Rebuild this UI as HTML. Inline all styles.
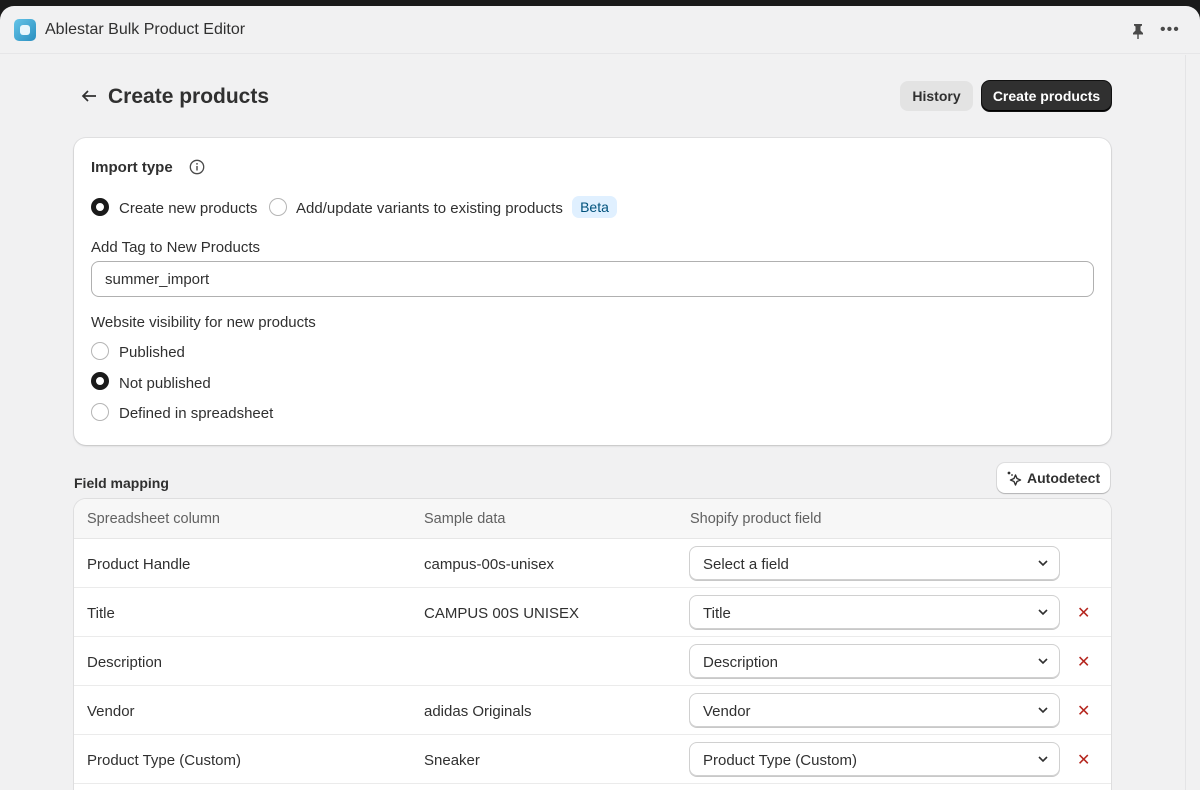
<!DOCTYPE html>
<html><head><style>
*{box-sizing:border-box;margin:0;padding:0}
html,body{width:1200px;height:790px;overflow:hidden}
body{background:#1a1a1a;font-family:"Liberation Sans",sans-serif;color:#303030;position:relative}
.win{position:absolute;left:0;top:6px;width:1200px;height:784px;background:#f1f1f2;border-radius:14px 14px 0 0}
.hdr{height:48px;display:flex;align-items:center;padding-left:14px;font-size:16px;color:#303030;border-bottom:1px solid #e6e6e8}
.logo{width:22px;height:22px;border-radius:5px;background:linear-gradient(135deg,#64c4e8,#2a8fc0);margin-right:9px;display:flex;align-items:center;justify-content:center}
.logo i{width:10px;height:10px;background:#e8f6fc;border-radius:3px;display:block}
.inner{position:absolute;left:0;top:49px;width:1186px;bottom:0;border-right:1px solid #e4e4e6}
.abs{position:absolute}
.card{position:absolute;left:74px;top:138px;width:1037px;height:307px;background:#fff;border-radius:12px;box-shadow:0 1px 2px rgba(0,0,0,.15),0 0 0 1px rgba(0,0,0,.06)}
.t14{font-size:15px}
.radio{position:absolute;width:18px;height:18px;border-radius:50%;border:1px solid #b5b5b5;background:#fff}
.radio.on{border:5px solid #1a1a1a}
.input{position:absolute;left:17px;top:123px;width:1003px;height:36px;border:1px solid #b0b0b0;border-radius:8px;font-size:15px;padding:9px 13px}
.table{position:absolute;left:74px;top:499px;width:1037px;height:320px;background:#fff;border-radius:12px;box-shadow:0 0 0 1px rgba(0,0,0,.08)}
.th{position:absolute;top:0;left:0;right:0;height:40px;background:#f7f7f7;border-radius:12px 12px 0 0;border-bottom:1px solid #e6e6e6;font-size:14.5px;color:#616161}
.row{position:absolute;left:0;right:0;height:49px;border-bottom:1px solid #ebebeb;font-size:15px}
.row span{position:absolute;top:17px}
.sel{position:absolute;left:615px;top:7px;width:371px;height:34px;border-radius:8px;border:1px solid #d0d0d0;box-shadow:0 1px 0 #c8c8c8;font-size:15px;padding:9px 13px}
.sel svg{position:absolute;right:10px;top:12px}
.x{position:absolute;left:1003px;top:15px;color:#b5261e;font-size:16px}
</style></head><body>
<div class="win">
<div class="hdr"><div class="logo"><i></i></div>Ablestar Bulk Product Editor</div>
<div class="inner"></div>
</div>
<svg class="abs" style="left:1131px;top:23px" width="14" height="16" viewBox="0 0 14 16"><path d="M3 1h8v1.5l-1.5 1v4l2.5 2.5v1.5H2V10l2.5-2.5v-4L3 2.5z M6.3 11.5h1.4V16H6.3z" fill="#4a4a4a"/></svg>
<div class="abs" style="left:1160px;top:21px;font-size:16px;letter-spacing:1px;color:#4a4a4a">•••</div>
<svg class="abs" style="left:81px;top:89px" width="16" height="14" viewBox="0 0 16 14"><path d="M15 7H2M7 2L2 7l5 5" stroke="#303030" stroke-width="1.7" fill="none"/></svg>
<div class="abs" style="left:108px;top:85px;font-size:21px;font-weight:bold;color:#303030">Create products</div>
<div class="abs" style="left:900px;top:81px;width:73px;height:30px;background:#e3e3e3;border-radius:8px;font-size:14px;font-weight:bold;color:#303030;text-align:center;line-height:30px">History</div>
<div class="abs" style="left:982px;top:81px;width:129px;height:30px;background:#303030;border-radius:8px;font-size:14px;font-weight:bold;color:#fff;text-align:center;line-height:30px;box-shadow:inset 0 -1px 0 #000,0 0 0 1px #111">Create products</div>

<div class="card">
<div class="abs" style="left:17px;top:21px;font-size:15px;font-weight:bold">Import type</div>
<svg class="abs" style="left:115px;top:21px" width="16" height="16" viewBox="0 0 16 16"><circle cx="8" cy="8" r="6.7" stroke="#4a4a4a" stroke-width="1.3" fill="none"/><path d="M8 7v4.5" stroke="#4a4a4a" stroke-width="1.4"/><circle cx="8" cy="4.9" r=".9" fill="#4a4a4a"/></svg>
<div class="radio on" style="left:17px;top:60px"></div>
<div class="abs t14" style="left:45px;top:62px">Create new products</div>
<div class="radio" style="left:195px;top:60px"></div>
<div class="abs t14" style="left:222px;top:62px">Add/update variants to existing products</div>
<div class="abs" style="left:498px;top:58px;width:45px;height:22px;background:#e0f0ff;border-radius:7px;font-size:14px;color:#00527c;text-align:center;line-height:22px">Beta</div>
<div class="abs t14" style="left:17px;top:101px">Add Tag to New Products</div>
<div class="input">summer_import</div>
<div class="abs t14" style="left:17px;top:176px">Website visibility for new products</div>
<div class="radio" style="left:17px;top:204px"></div>
<div class="abs t14" style="left:45px;top:206px">Published</div>
<div class="radio on" style="left:17px;top:234px"></div>
<div class="abs t14" style="left:45px;top:237px">Not published</div>
<div class="radio" style="left:17px;top:265px"></div>
<div class="abs t14" style="left:45px;top:267px">Defined in spreadsheet</div>
</div>

<div class="abs" style="left:74px;top:475px;font-size:14px;font-weight:bold">Field mapping</div>
<div class="abs" style="left:997px;top:463px;width:113px;height:30px;background:#fff;border-radius:8px;box-shadow:0 1px 1px rgba(0,0,0,.2),0 0 0 1px rgba(0,0,0,.08);font-size:14px;font-weight:bold;line-height:30px;padding-left:30px">Autodetect</div>
<svg class="abs" style="left:1006px;top:470px" width="16" height="16" viewBox="0 0 16 16"><path d="M9.5 5l1.5 3.5L14.5 10 11 11.5 9.5 15 8 11.5 4.5 10 8 8.5z" stroke="#303030" stroke-width="1.4" fill="none" stroke-linejoin="round"/><circle cx="3" cy="3" r="1.4" fill="#303030"/><circle cx="6" cy="5" r=".9" fill="#303030"/></svg>

<div class="table">
<div class="th"><span class="abs" style="left:13px;top:12px">Spreadsheet column</span><span class="abs" style="left:350px;top:12px">Sample data</span><span class="abs" style="left:616px;top:12px">Shopify product field</span></div>
<div class="row" style="top:40px"><span style="left:13px">Product Handle</span><span style="left:350px">campus-00s-unisex</span><div class="sel">Select a field<svg width="12" height="8" viewBox="0 0 12 8"><path d="M2 2l4 4 4-4" stroke="#303030" stroke-width="1.6" fill="none"/></svg></div></div>
<div class="row" style="top:89px"><span style="left:13px">Title</span><span style="left:350px">CAMPUS 00S UNISEX</span><div class="sel">Title<svg width="12" height="8" viewBox="0 0 12 8"><path d="M2 2l4 4 4-4" stroke="#303030" stroke-width="1.6" fill="none"/></svg></div><div class="x">✕</div></div>
<div class="row" style="top:138px"><span style="left:13px">Description</span><div class="sel">Description<svg width="12" height="8" viewBox="0 0 12 8"><path d="M2 2l4 4 4-4" stroke="#303030" stroke-width="1.6" fill="none"/></svg></div><div class="x">✕</div></div>
<div class="row" style="top:187px"><span style="left:13px">Vendor</span><span style="left:350px">adidas Originals</span><div class="sel">Vendor<svg width="12" height="8" viewBox="0 0 12 8"><path d="M2 2l4 4 4-4" stroke="#303030" stroke-width="1.6" fill="none"/></svg></div><div class="x">✕</div></div>
<div class="row" style="top:236px"><span style="left:13px">Product Type (Custom)</span><span style="left:350px">Sneaker</span><div class="sel">Product Type (Custom)<svg width="12" height="8" viewBox="0 0 12 8"><path d="M2 2l4 4 4-4" stroke="#303030" stroke-width="1.6" fill="none"/></svg></div><div class="x">✕</div></div>
</div>
</body></html>
